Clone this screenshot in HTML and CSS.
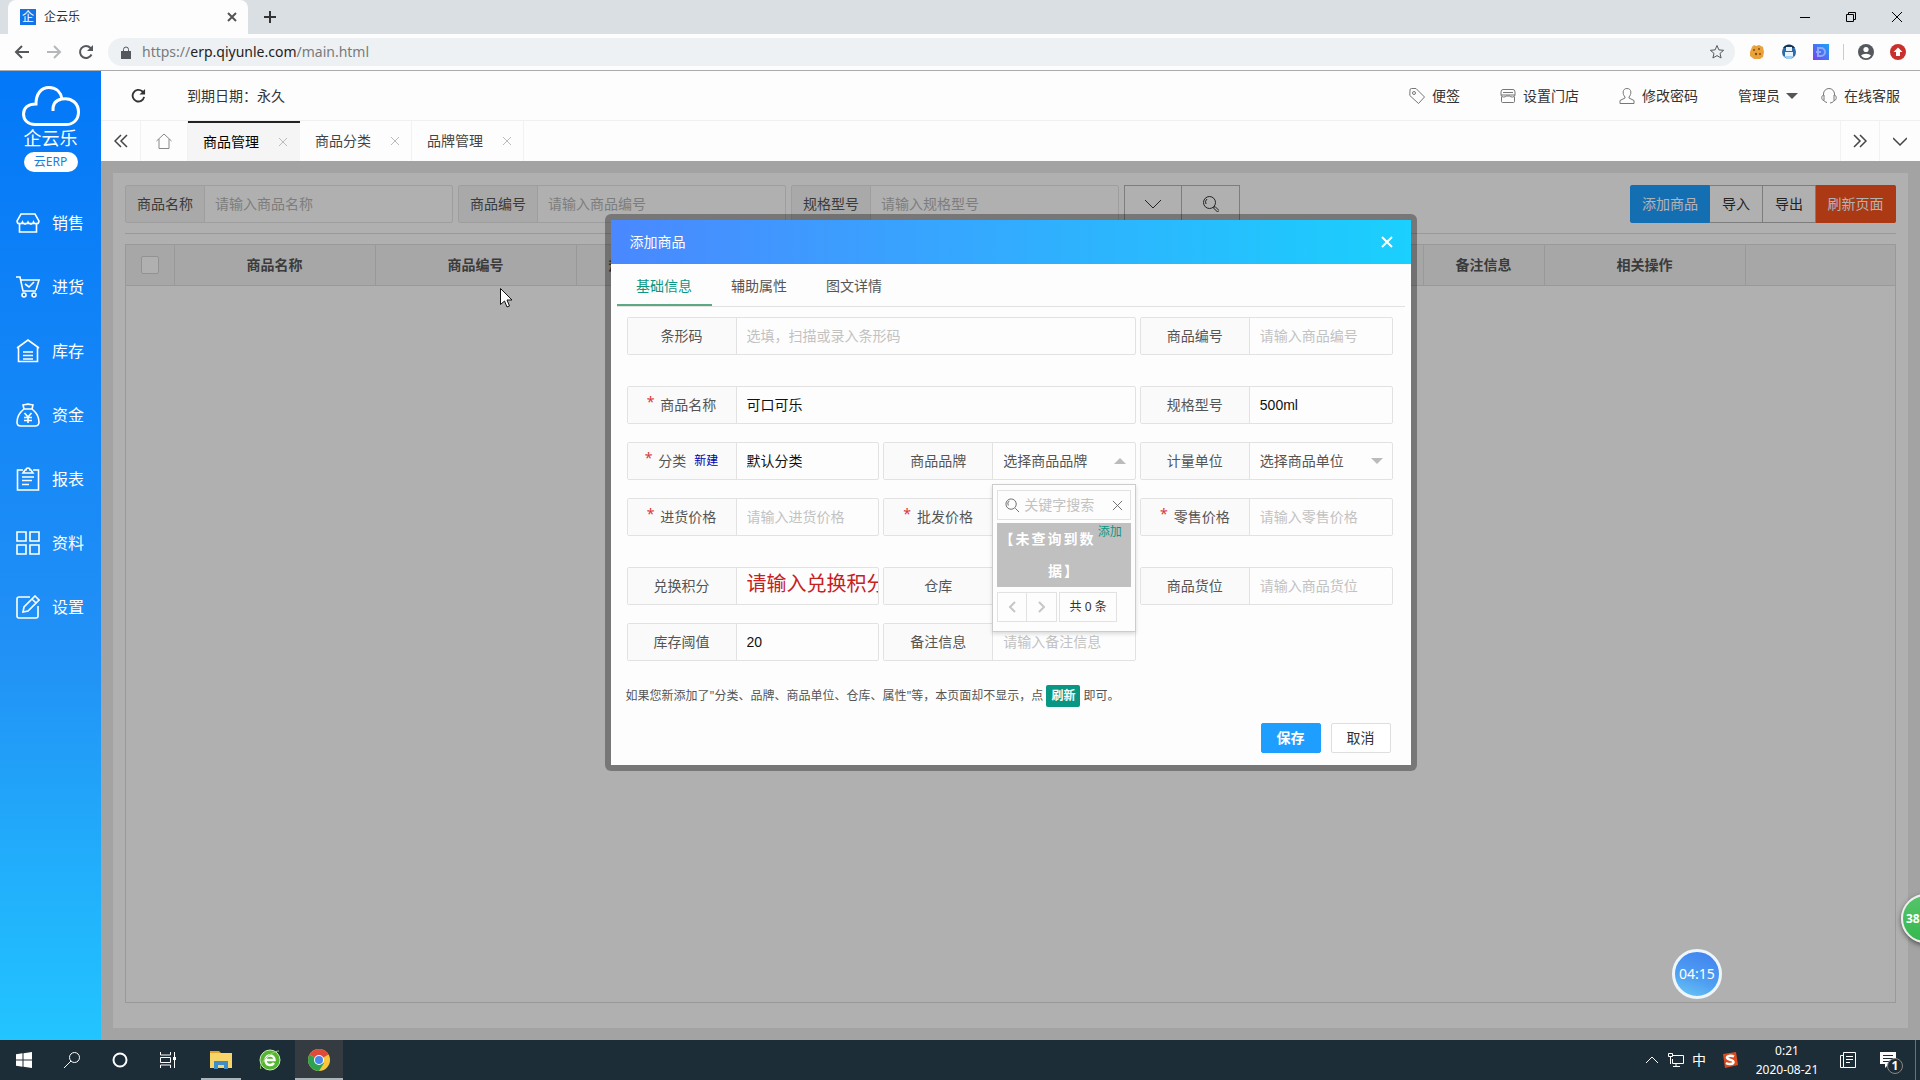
FILE: index.html
```html
<!DOCTYPE html>
<html lang="zh-CN">
<head>
<meta charset="utf-8">
<title>企云乐</title>
<link rel="stylesheet" href="styles.css">
</head>
<body>
<header class="browser">
  <div class="tabstrip">
    <div class="browser-tab">
      <span class="favicon">企</span>
      <span class="browser-title">企云乐</span>
      <svg class="tab-x" viewBox="0 0 10 10"><path d="M1 1l8 8M9 1l-8 8"/></svg>
    </div>
    <svg class="new-tab" viewBox="0 0 12 12"><path d="M6 0v12M0 6h12"/></svg>
    <div class="window-buttons">
      <svg viewBox="0 0 10 10"><path d="M0 5.500h10"/></svg>
      <svg viewBox="0 0 10 10"><path d="M.5 2.500h7v7h-7zM2.500 2.500v-2h7v7h-2"/></svg>
      <svg viewBox="0 0 10 10"><path d="M0 0l10 10M10 0L0 10"/></svg>
    </div>
  </div>
  <div class="toolbar">
    <svg class="nav-icon" viewBox="0 0 16 16"><path d="M15 8H2M8 2L2 8l6 6"/></svg>
    <svg class="nav-icon faint" viewBox="0 0 16 16"><path d="M1 8h13M8 2l6 6-6 6"/></svg>
    <svg class="nav-icon" viewBox="0 0 16 16"><path d="M13.500 10.500A6 6 0 1 1 12.500 4L14 5.500"/><path class="solid" d="M15 1v6H9z"/></svg>
    <div class="omnibox">
      <svg class="lock" viewBox="0 0 10 13"><path class="solid" d="M0 5h10v8H0z"/><path d="M2.500 5V3.500a2.500 2.500 0 0 1 5 0V5"/></svg>
      <span class="url">https://<b>erp.qiyunle.com</b>/main.html</span>
      <svg class="star" viewBox="0 0 16 16"><path d="M8 1.500l1.900 4.400 4.700.4-3.600 3.100 1.100 4.600L8 11.600 3.900 14 5 9.400 1.400 6.300l4.700-.4z"/></svg>
    </div>
    <div class="extensions">
      <svg viewBox="0 0 16 16"><path fill="#e9a23b" d="M3 3l2-2 2 1 3-1 4 2 1 5-1 5-3 2H5l-4-3V8z"/><circle cx="5" cy="6" r="1" fill="#8a4a12"/><circle cx="10" cy="5" r="1" fill="#8a4a12"/><circle cx="7" cy="10" r="1.200" fill="#8a4a12"/><circle cx="11" cy="10" r="1" fill="#8a4a12"/></svg>
      <svg viewBox="0 0 16 16"><circle cx="8" cy="8" r="7" fill="#2f6aa8"/><path fill="#12345c" d="M2 4a7 7 0 0 1 12 0z"/><path fill="#e8f2fb" d="M5 3h6v4H5zM4 8h8v4H4z"/><path fill="#9fd0f2" d="M3 12h10l-3 3H6z"/></svg>
      <svg viewBox="0 0 16 16"><defs><linearGradient id="ext" x1="0" y1="1" x2="1" y2="0"><stop offset="0" stop-color="#7b3ff2"/><stop offset="1" stop-color="#19a5f5"/></linearGradient></defs><path fill="url(#ext)" d="M0 0h16v16H0z"/><path fill="none" stroke="#8fa9fa" stroke-width="2" d="M5 4h3a4 4 0 0 1 0 8H5zM3 8h5"/></svg>
      <i class="bar"></i>
      <svg viewBox="0 0 16 16"><circle cx="8" cy="8" r="8" fill="#55585c"/><circle cx="8" cy="5.500" r="2.600" fill="#fff"/><path fill="#fff" d="M3 11.500a5.500 3 0 0 1 10 0 6 6 0 0 1-10 0z"/></svg>
      <svg viewBox="0 0 16 16"><circle cx="8" cy="8" r="8" fill="#c9302c"/><path fill="#fff" d="M8 3.500L12.500 8H10v4H6V8H3.500z"/></svg>
    </div>
  </div>
</header>

<div class="app">
  <aside class="sidebar">
    <div class="brand">
      <svg class="cloud" viewBox="0 0 58 40"><path d="M13 38.500C6 38.500 1.500 34 1.500 28S6 18 14 18C14 8 19 1.500 27 1.500S39 7 40 13C50 11 56.500 18 56.500 26S51 38.500 44 38.500zM40 13C34 14 30.500 18 31 25"/></svg>
      <span class="brand-name">企云乐</span>
      <span class="brand-tag">云ERP</span>
    </div>
    <nav class="menu">
      <a href="#"><svg viewBox="0 0 24 24"><path d="M5 3h14l4 7-1 2.500H2L1 10zM1 11c1 3 4 3 5.500 0 1 3 4 3 5.500 0 1.500 3 4.500 3 5.500 0 1.500 3 4.500 3 5.500 0M3.500 13v8h17v-8"/></svg>销售</a>
      <a href="#"><svg viewBox="0 0 24 24"><path d="M0 2h4l3 14h13M5 5h18l-3 10M9 9l4 3 5-5"/><circle cx="8" cy="20" r="2"/><circle cx="18" cy="20" r="2"/></svg>进货</a>
      <a href="#"><svg viewBox="0 0 24 24"><path d="M1 9l11-8 11 8M2.500 8.500V22.500h19V8.500M7 13h10M7 16.500h10M7 20h10"/></svg>库存</a>
      <a href="#"><svg viewBox="0 0 24 24"><path d="M8 6L7 2c2-1 3 0 5-1 2 1 3 0 5 1l-1 4c5 4 7 9 7 13 0 3-1 4-4 4H5c-3 0-4-1-4-4 0-4 2-9 7-13zM8 6h8M8.500 10l3.500 4 3.500-4M12 14v6M8 14.500h8M8 17.500h8"/></svg>资金</a>
      <a href="#"><svg viewBox="0 0 24 24"><path d="M7 3H1.500v20h21V3H17M7 6h10l-2-3h-1a2 2 0 0 0-4 0H9zM6 10h12M6 13.500h10M6 17.500h7"/></svg>报表</a>
      <a href="#"><svg viewBox="0 0 24 24"><path d="M1 1h9v9H1zM14 1h9v9h-9zM1 14h9v9H1zM14 14h9v9h-9z"/></svg>资料</a>
      <a href="#"><svg viewBox="0 0 24 24"><path d="M14 2H3a2 2 0 0 0-2 2v17a2 2 0 0 0 2 2h17a2 2 0 0 0 2-2V11M7 17l1-5L19 1l4 4-11 11zM16 4l4 4"/></svg>设置</a>
    </nav>
  </aside>

  <main class="main">
    <div class="topbar">
      <button class="plain reload" aria-label="刷新"><svg viewBox="0 0 16 16"><path d="M14 9.500A6.200 6.200 0 1 1 12 3.500L14 5.500"/><path class="solid" d="M15 1v6H9z"/></svg></button>
      <span class="expiry">到期日期：永久</span>
      <nav class="toplinks">
        <a href="#"><svg viewBox="0 0 16 16"><path d="M1 2q0-1.500 1.500-1.500H7L15.500 9 9.500 15.500.8 7.500z"/><circle cx="5" cy="5" r="1.500"/></svg>便签</a>
        <a href="#"><svg viewBox="0 0 16 16"><path d="M3 1.500h10q2 0 2 2.500v3H1V4q0-2.500 2-2.500zM3 4.500h10M1 7q0 2 2.500 2T6 8h4q0 1 2.500 1T15 7M1.500 9v4.500q0 1 1 1h11q1 0 1-1V9"/></svg>设置门店</a>
        <a href="#"><svg viewBox="0 0 16 16"><path d="M8 .5c5 0 4.500 6 2 8.500v1l5 2.500v3H1v-3L6 10V9C3.500 6.500 3 .5 8 .5z"/></svg>修改密码</a>
        <a href="#" class="user">管理员<i class="caret"></i></a>
        <a href="#"><svg viewBox="0 0 16 16"><path d="M2.500 7V6a5.500 5.500 0 0 1 11 0v1M3 7C0 7 0 12.500 3 12.500zM13 7c3 0 3 5.500 0 5.500zM13 12.500q-1 2.500-4 2.500M3 12.500q1 2 3 2"/></svg>在线客服</a>
      </nav>
    </div>
    <nav class="pagetabs">
      <button class="plain cell" aria-label="向左"><svg viewBox="0 0 14 14"><path d="M7 1L1 7l6 6M13 1L7 7l6 6"/></svg></button>
      <a href="#" class="home" aria-label="首页"><svg viewBox="0 0 16 16"><path d="M.5 8L8 1l7.500 7M3 6v9.500h10V6"/></svg></a>
      <a href="#" class="tab on">商品管理<svg viewBox="0 0 8 8"><path d="M0 0l8 8M8 0L0 8"/></svg></a>
      <a href="#" class="tab">商品分类<svg viewBox="0 0 8 8"><path d="M0 0l8 8M8 0L0 8"/></svg></a>
      <a href="#" class="tab">品牌管理<svg viewBox="0 0 8 8"><path d="M0 0l8 8M8 0L0 8"/></svg></a>
      <button class="plain cell push" aria-label="向右"><svg viewBox="0 0 14 14"><path d="M1 1l6 6-6 6M7 1l6 6-6 6"/></svg></button>
      <button class="plain cell" aria-label="更多"><svg viewBox="0 0 14 14"><path d="M0 4l7 7 7-7"/></svg></button>
    </nav>

    <section class="workspace">
      <div class="card">
        <div class="filters">
          <label class="field"><span>商品名称</span><input placeholder="请输入商品名称"></label>
          <label class="field"><span>商品编号</span><input placeholder="请输入商品编号"></label>
          <label class="field"><span>规格型号</span><input placeholder="请输入规格型号"></label>
          <div class="btns icons">
            <button aria-label="展开"><svg viewBox="0 0 16 16"><path d="M0 4l8 8 8-8"/></svg></button>
            <button aria-label="搜索"><svg viewBox="0 0 16 16"><circle cx="6.500" cy="6.500" r="6"/><path d="M3 8a4 4 0 0 1 1-5M11 11l1-.5 4 4-1.500 1.500-4-4z"/></svg></button>
          </div>
          <div class="btns actions">
            <button class="blue">添加商品</button><button>导入</button><button>导出</button><button class="orange">刷新页面</button>
          </div>
        </div>
        <div class="grid-box">
          <table class="goods">
            <colgroup><col class="c-check"><col class="c-wide"><col class="c-wide"><col class="c-mid"><col class="c-mid"><col class="c-mid"><col class="c-mid"><col class="c-mid"><col class="c-mid"><col class="c-mid"><col class="c-mid"><col class="c-wide"><col></colgroup>
            <thead><tr><th><input type="checkbox" aria-label="全选"></th><th>商品名称</th><th>商品编号</th><th>规格型号</th><th></th><th></th><th></th><th></th><th></th><th></th><th>备注信息</th><th>相关操作</th><th></th></tr></thead>
          </table>
        </div>
      </div>

      <div class="shade">
        <div class="dialog" role="dialog" aria-labelledby="dlg-title">
          <div class="dialog-head"><h1 id="dlg-title">添加商品</h1><button class="plain" aria-label="关闭"><svg viewBox="0 0 12 12"><path d="M1 1l10 10M11 1L1 11"/></svg></button></div>
          <nav class="dialog-tabs"><a href="#" class="on">基础信息</a><a href="#">辅助属性</a><a href="#">图文详情</a></nav>
          <form class="form">
            <label class="field wide far"><span>条形码</span><input placeholder="选填，扫描或录入条形码"></label>
            <label class="field far"><span>商品编号</span><input placeholder="请输入商品编号"></label>

            <label class="field wide"><span><i>*</i>商品名称</span><input value="可口可乐"></label>
            <label class="field"><span>规格型号</span><input value="500ml"></label>

            <div class="field"><span><i>*</i><label for="cat">分类</label><a href="#">新建</a></span><input id="cat" value="默认分类"></div>
            <div class="field picker">
              <label class="cap" for="brand">商品品牌</label>
              <select id="brand"><option>选择商品品牌</option></select><i class="arrow up"></i>
              <div class="dropdown">
                <div class="search"><svg viewBox="0 0 16 16"><circle cx="6.500" cy="6.500" r="5.500"/><path d="M3.500 8a4 4 0 0 1 1-5M11 11l4 4"/></svg><input placeholder="关键字搜索" aria-label="关键字搜索"><svg class="x" viewBox="0 0 12 12"><path d="M1 1l10 10M11 1L1 11"/></svg></div>
                <div class="nothing"><a href="#">添加</a>【未查询到数据】</div>
                <div class="pager"><button type="button" aria-label="上一页"><svg viewBox="0 0 8 12"><path d="M7 1L2 6l5 5"/></svg></button><button type="button" aria-label="下一页"><svg viewBox="0 0 8 12"><path d="M1 1l5 5-5 5"/></svg></button><span>共 0 条</span></div>
              </div>
            </div>
            <label class="field"><span>计量单位</span><select><option>选择商品单位</option></select><i class="arrow down"></i></label>

            <label class="field far"><span><i>*</i>进货价格</span><input placeholder="请输入进货价格"></label>
            <label class="field far"><span><i>*</i>批发价格</span><input></label>
            <label class="field far"><span><i>*</i>零售价格</span><input placeholder="请输入零售价格"></label>

            <label class="field points"><span>兑换积分</span><input placeholder="请输入兑换积分"></label>
            <label class="field"><span>仓库</span><input></label>
            <label class="field"><span>商品货位</span><input placeholder="请输入商品货位"></label>

            <label class="field"><span>库存阈值</span><input value="20"></label>
            <label class="field"><span>备注信息</span><input placeholder="请输入备注信息"></label>
          </form>
          <p class="hint">如果您新添加了"分类、品牌、商品单位、仓库、属性"等，本页面却不显示，点 <button>刷新</button> 即可。</p>
          <div class="dialog-foot"><button class="save">保存</button><button>取消</button></div>
        </div>
      </div>
    </section>
  </main>
</div>

<footer class="taskbar">
  <button class="plain slot" aria-label="开始"><svg viewBox="0 0 16 16"><path fill="#fff" d="M0 2.200l6.500-.9v6.200H0zM7.500 1.200L16 0v7.500H7.500zM0 8.500h6.500v6.200L0 13.800zM7.500 8.500H16V16l-8.500-1.200z"/></svg></button>
  <button class="plain slot" aria-label="搜索"><svg class="line" viewBox="0 0 16 16"><circle cx="10.500" cy="5.500" r="5"/><path d="M7 9l-7 7"/></svg></button>
  <button class="plain slot" aria-label="语音"><svg class="line ring" viewBox="0 0 16 16"><circle cx="8" cy="8" r="6.500"/></svg></button>
  <button class="plain slot" aria-label="任务视图"><svg class="line" viewBox="0 0 16 16"><path d="M.5 0v3h10V0M.5 5.500h10v5H.5zM.5 16v-3h10v3M14.500 0v16"/><path class="dot" d="M13 5h3v3h-3z"/></svg></button>
  <button class="plain slot open" aria-label="文件"><svg class="big" viewBox="0 0 22 20"><path fill="#e2a42c" d="M0 1h9l2 2H0z"/><path fill="#f8d568" d="M0 3h22v15H0z"/><path fill="#3f8dc9" d="M4 11h14v8h-4v-4H8v4H4z"/></svg></button>
  <button class="plain slot" aria-label="浏览器"><svg class="big" viewBox="0 0 22 22"><circle cx="11" cy="11" r="10" fill="#55b531" stroke="#c9efb4"/><path fill="none" stroke="#fff" stroke-width="2.500" d="M6 11h9.500c0-6-9-6-9 0s6.500 6 8.500 3"/><path fill="none" stroke="#8fd860" d="M2 20C-1 15 12 2 20 2"/></svg></button>
  <button class="plain slot open active" aria-label="Chrome"><svg class="big" viewBox="0 0 22 22"><circle cx="11" cy="11" r="11" fill="#f9c83a"/><path fill="#de4a3b" d="M11 11L1.500 5.500a11 11 0 0 1 19 0z"/><path fill="#2fa153" d="M11 11L1.500 5.500A11 11 0 0 0 11 22l5-8z"/><circle cx="11" cy="11" r="5" fill="#fff"/><circle cx="11" cy="11" r="4" fill="#4a86ec"/></svg></button>
  <div class="tray">
    <svg class="line" viewBox="0 0 16 16"><path d="M2 11l6-6 6 6"/></svg>
    <svg class="line" viewBox="0 0 16 16"><path d="M5 3.500h10.500v8H4.500V7M8 11.500v3M5 14.500h7M.5 1.500h4v3h-4zM2.500 5v7"/></svg>
    <span class="ime">中</span>
    <svg class="sogou" viewBox="0 0 16 16"><path fill="#dc4b1f" d="M1 2l13-2 2 13-13 3z"/><path fill="none" stroke="#fff" stroke-width="2.500" d="M12 4.500C9 3 4.500 4 5 6s6.500 1.500 6.500 4-5 2.500-7.500 1"/></svg>
    <time class="clock">0:21<br>2020-08-21</time>
    <svg class="line note" viewBox="0 0 16 16"><path d="M3.500.5h12v15h-12zM3.500 3.500H.5v12h3M6 4.500h7M6 7.500h7M6 10.500h4"/></svg>
    <span class="notice"><svg viewBox="0 0 16 16"><path fill="#fff" d="M0 0h16v12H9l-4 4v-4H0z"/><path stroke="#1c2d38" d="M3 3.500h10M3 6.500h10M3 9.500h6"/></svg><b>1</b></span>
    <i class="edge"></i>
  </div>
</footer>

<div class="timer">04:15</div>
<div class="speed">38</div>
<svg class="pointer" viewBox="0 0 12 20"><path d="M.5.5v16l4-3.500 2.500 6 2.500-1-2.500-6h5z"/></svg>
</body>
</html>
```
FILE: styles.css
```css
* { box-sizing: border-box; }
html, body { height: 100%; }
body {
  margin: 0;
  display: flex;
  flex-direction: column;
  position: relative;
  overflow: hidden;
  font: 14px/20px "Noto Sans", "Noto Sans CJK SC", sans-serif;
  color: #333;
}
a { color: inherit; text-decoration: none; }
i { font-style: normal; }
button, input, select { font: inherit; color: inherit; margin: 0; }
svg { fill: none; stroke: currentColor; flex: none; }
svg [fill]:not([stroke]) { stroke: none; }
svg .solid { fill: currentColor; stroke: none; }
.plain { border: 0; background: none; padding: 0; }

/* browser frame */
.browser { flex: none; background: #fdfdfd; border-bottom: 1px solid #a9abad; }
.tabstrip { display: flex; align-items: center; height: 34px; background: #dadfe3; padding-left: 8px; }
.browser-tab {
  display: flex; align-items: center; align-self: stretch; gap: 8px;
  width: 240px; padding: 0 11px 0 12px;
  background: #fdfdfd; border-radius: 8px 8px 0 0; font-size: 12px;
}
.favicon { width: 16px; height: 16px; background: #1473e6; color: #fff; font-size: 12px; line-height: 15px; text-align: center; }
.browser-title { flex: 1; }
.tab-x { width: 10px; height: 10px; stroke-width: 2; color: #555; }
.new-tab { width: 12px; height: 12px; margin-left: 16px; stroke-width: 2; color: #333; }
.window-buttons { display: flex; margin-left: auto; height: 28px; color: #000; }
.window-buttons svg { width: 10px; height: 10px; margin: 9px 18px; }
.toolbar { display: flex; align-items: center; height: 36px; padding: 0 14px; }
.nav-icon { width: 16px; height: 16px; margin-right: 16px; stroke-width: 2; color: #55585c; }
.nav-icon.faint { color: #b5b8ba; }
.omnibox { flex: 1; display: flex; align-items: center; height: 28px; margin-left: -2px; padding: 0 10px 0 13px; border-radius: 14px; background: #eef1f3; }
.lock { width: 10px; height: 13px; color: #55585c; }
.url { flex: 1; margin-left: 11px; color: #777b7e; }
.url b { font-weight: 400; color: #222; }
.star { width: 16px; height: 16px; color: #55585c; }
.extensions { display: flex; align-items: center; gap: 16px; margin-left: 14px; }
.extensions svg { width: 16px; height: 16px; }
.extensions .bar { width: 1px; height: 16px; margin: 0 -2px; background: #c9ccce; }

/* application shell */
.app { flex: 1; min-height: 0; display: flex; }
.sidebar { flex: none; width: 101px; background: linear-gradient(#0378f8, #2191f6 60%, #22c5ff); color: #fff; }
.brand { display: flex; flex-direction: column; align-items: center; height: 120px; padding-top: 15px; }
.cloud { width: 58px; height: 40px; stroke-width: 3; }
.brand-name { font-size: 18px; line-height: 24px; }
.brand-tag { width: 54px; margin-top: 2px; border-radius: 10px; background: #fff; color: #1a7de0; font-size: 12px; line-height: 20px; text-align: center; }
.menu a { display: flex; align-items: center; gap: 12px; height: 64px; padding-left: 16px; font-size: 16px; }
.menu svg { width: 24px; height: 24px; stroke-width: 1.6; }

.main { flex: 1; min-width: 0; display: flex; flex-direction: column; }
.topbar { flex: none; display: flex; align-items: center; height: 50px; padding: 0 20px 0 30px; border-bottom: 1px solid #f0f0f0; background: #fdfdfd; }
.reload, .reload svg { width: 15px; height: 15px; }
.reload svg { display: block; stroke-width: 2; }
.expiry { margin-left: 41px; }
.toplinks { display: flex; margin-left: auto; gap: 40px; }
.toplinks a { display: flex; align-items: center; gap: 7px; }
.toplinks svg { width: 16px; height: 16px; color: #777; }
.toplinks .user { gap: 6px; margin-right: -17px; }
.caret { border: 6px solid transparent; border-top-color: #555; border-bottom: 0; }
.pagetabs { flex: none; display: flex; height: 40px; background: #fdfdfd; color: #444; }
.pagetabs > * { display: flex; align-items: center; border-right: 1px solid #f2f2f2; }
.pagetabs .cell { justify-content: center; width: 40px; }
.cell svg { width: 14px; height: 14px; stroke-width: 1.5; }
.pagetabs .cell:last-child { border: 0; }
.pagetabs .push { margin-left: auto; border-left: 1px solid #f2f2f2; }
.pagetabs .home { justify-content: center; width: 47px; color: #888; }
.home svg { width: 16px; height: 16px; }
.tab { gap: 20px; width: 112px; padding-left: 15px; }
.tab svg { width: 8px; height: 8px; color: #bbb; }
.tab.on { background: #f5f5f5; color: #000; border-top: 2px solid #222; border-right: 0; }

/* list page */
.workspace { position: relative; flex: 1; min-height: 0; padding: 12px; background: #eaeaea; }
.card { display: flex; flex-direction: column; height: 100%; padding: 12px; padding-bottom: 25px; background: #fcfcfc; }
.filters { display: flex; gap: 5px; padding-bottom: 10px; border-bottom: 1px solid #dcdcdc; }
.field { display: flex; height: 38px; border: 1px solid #e2e2e2; border-radius: 2px; min-width: 0; }
.field > span, .field .cap { flex: none; display: flex; align-items: center; justify-content: center; background: #fafafa; border-right: 1px solid #e2e2e2; color: #555; }
.field input, .field select { flex: 1; min-width: 0; width: 0; border: 0; padding: 0 0 0 10px; background: none; outline: 0; }
input::placeholder { color: #c2c2c2; opacity: 1; }
.filters .field { flex: 0 1 328px; }
.filters .field > span { width: 79px; background: #f2f2f2; }
.filters input::placeholder { color: #b4b4b4; }
.btns { display: flex; height: 38px; }
.btns button { width: 53px; padding: 0; border: 1px solid #b4b4b4; background: none; }
.btns button + button { border-left: 0; }
.btns.icons button { width: 58px; }
.icons svg { display: block; width: 16px; height: 16px; margin: auto; }
.actions { margin-left: auto; }
.btns .blue { width: 80px; background: #1e9fff; border-color: #1e9fff; color: #fff; border-radius: 2px 0 0 2px; }
.btns .orange { width: 80px; background: #f5521c; border-color: #f5521c; color: #fff; border-radius: 0 2px 2px 0; }
.grid-box { flex: 1; margin-top: 10px; border: 1px solid #dcdcdc; }
.goods { width: 100%; table-layout: fixed; border-collapse: collapse; }
.c-check { width: 48px; }
.c-wide { width: 201px; }
.c-mid { width: 121px; }
.goods th { height: 40px; padding: 0; border-right: 1px solid #dcdcdc; border-bottom: 1px solid #dcdcdc; background: #f0f0f0; font-weight: 700; color: #555; }
.goods th:last-child { border-right: 0; }
.goods input { appearance: none; display: block; width: 18px; height: 18px; margin: auto; border: 1px solid #d2d2d2; border-radius: 2px; background: #fcfcfc; }

/* dialog */
.shade { position: absolute; inset: 0; display: flex; justify-content: center; align-items: flex-start; padding-top: 53px; background: rgba(0, 0, 0, .3); }
.dialog { width: 812px; border: 6px solid rgba(0, 0, 0, .32); border-radius: 6px; background: #fdfdfd padding-box; }
.dialog-head { display: flex; align-items: center; justify-content: space-between; height: 44px; padding: 0 18px 0 19px; background: linear-gradient(90deg, #4a88ff, #1ad0fd); color: #fff; }
.dialog-head h1 { margin: 0; font-size: 14px; line-height: 20px; font-weight: 400; }
.dialog-head svg { display: block; width: 12px; height: 12px; stroke-width: 2; }
.dialog-tabs { display: flex; height: 43px; margin: 0 6px; border-bottom: 1px solid #e2e2e2; }
.dialog-tabs a { width: 95px; line-height: 44px; text-align: center; color: #555; }
.dialog-tabs .on { border-bottom: 2px solid #5fa884; color: #099784; }
.form { display: grid; grid-template-columns: repeat(3, 1fr); gap: 18px 4px; padding: 10px 18px 0 16px; }
.form .wide { grid-column: span 2; }
.form .far { margin-bottom: 13px; }
.form .field > span, .form .cap { width: 109px; }
.form .field { position: relative; }
.form .field input { color: #111; font-family: "Liberation Sans", "Noto Sans CJK SC", sans-serif; }
.form span i { color: #d8383a; margin: -6px 6px 0 0; }
.form span a { margin-left: 8px; font-size: 12px; color: #00a; }
.form select { appearance: none; color: #555; }
.points input::placeholder { font-size: 20px; line-height: 36px; color: #c8201f; }
.arrow { align-self: center; margin-right: 9px; border: 6px solid transparent; }
.arrow.up { border-bottom-color: #bbb; border-top: 0; }
.arrow.down { border-top-color: #bbb; border-bottom: 0; }
.dropdown { position: absolute; z-index: 1; top: 41px; left: 108px; right: -1px; padding: 5px 4px 9px; border: 1px solid #ccc; background: #fdfdfd; box-shadow: 0 2px 4px rgba(0, 0, 0, .14); }
.search { display: flex; align-items: center; height: 30px; padding: 0 7px; border: 1px solid #e2e2e2; color: #666; }
.search svg { width: 15px; height: 15px; }
.search .x { width: 11px; height: 11px; }
.field .search input { padding-left: 4px; }
.nothing { margin: 3px 0 5px; background: #c0c0c0; color: #fff; font-weight: 700; line-height: 32px; text-align: center; letter-spacing: 2px; }
.nothing a { float: right; padding-right: 9px; font-size: 12px; font-weight: 400; line-height: 18px; letter-spacing: 0; color: #099784; }
.pager { display: flex; height: 30px; font-size: 12px; color: #333; }
.pager button { display: flex; align-items: center; justify-content: center; width: 30px; padding: 0; border: 1px solid #e2e2e2; background: none; }
.pager button + button { border-left: 0; }
.pager svg { width: 8px; height: 12px; color: #c6c6c6; stroke-width: 2; }
.pager span { width: 58px; margin-left: 2px; border: 1px solid #e2e2e2; line-height: 28px; text-align: center; }
.hint { margin: 24px 0 0 15px; font-size: 12px; line-height: 22px; color: #555; }
.hint button { height: 22px; padding: 0 5px; border: 0; border-radius: 2px; background: #099784; color: #fff; font-weight: 700; }
.dialog-foot { display: flex; justify-content: flex-end; gap: 10px; padding: 16px 20px 12px; }
.dialog-foot button { width: 60px; height: 30px; padding: 0; border: 1px solid #dedede; border-radius: 2px; background: #fff; }
.dialog-foot .save { background: #1e9fff; border-color: #1e9fff; color: #fff; font-weight: 700; }

/* taskbar */
.taskbar { flex: none; display: flex; height: 40px; background: #1c2d38; color: #fff; }
.slot { display: flex; align-items: center; justify-content: center; width: 48px; color: #fff; }
.slot svg { width: 16px; height: 16px; }
.slot .big { width: 22px; height: 22px; }
.slot .ring { stroke-width: 2; }
.slot:nth-child(5) { width: 40px; margin-left: 9px; }
.slot:nth-child(6) { margin: 0 2px 0 6px; width: 46px; }
.slot.open { border-bottom: 2px solid #a9b4bb; padding-top: 2px; }
.slot.active { background: #353c41; }
.dot { fill: #fff; stroke: none; }
.tray { display: flex; align-items: center; margin-left: auto; }
.tray svg { width: 16px; height: 16px; }
.tray svg + svg { margin-left: 8px; }
.ime { margin-left: 8px; }
.sogou { margin-left: 16px; }
.clock { width: 66px; margin: 0 20px 0 16px; font-size: 12px; line-height: 19px; text-align: center; }
.notice { position: relative; display: flex; margin: 0 19px 0 24px; }
.notice b { position: absolute; left: 7px; top: 6px; width: 16px; height: 16px; border: 1px solid #888; border-radius: 50%; background: #1f2b33; font-size: 12px; line-height: 14px; text-align: center; }
.edge { width: 1px; height: 40px; margin-right: 4px; background: #66737b; }

/* floating desktop widgets */
.timer, .speed, .pointer { position: absolute; }
.timer { right: 198px; bottom: 81px; width: 50px; height: 50px; border: 3px solid #eef6fc; border-radius: 50%; background: linear-gradient(200deg, #3f80ee, #4f9ff2 60%, #6cc8f4); color: #fff; line-height: 44px; text-align: center; }
.speed { right: -30px; bottom: 137px; width: 49px; height: 49px; padding-left: 3px; border: 2px solid #eee; border-radius: 50%; background: linear-gradient(#55c46a, #35b84f); box-shadow: 0 2px 5px rgba(0, 0, 0, .5); color: #fff; font-size: 12px; font-weight: 700; line-height: 45px; }
.pointer { left: 500px; top: 288px; width: 12px; height: 20px; fill: #fff; stroke: #111; }
```
